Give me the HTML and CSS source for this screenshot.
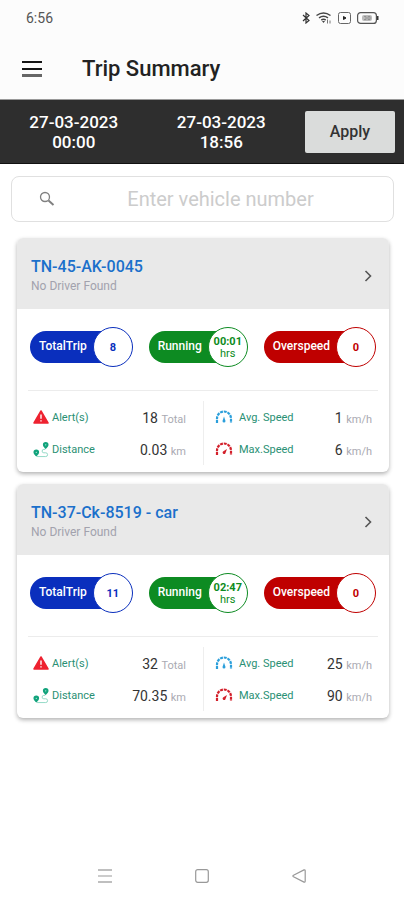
FILE: index.html
```html
<!DOCTYPE html>
<html lang="en">
<head>
<meta charset="utf-8">
<meta name="viewport" content="width=device-width, initial-scale=1">
<title>Trip Summary</title>
<link rel="stylesheet" href="styles.css">
</head>
<body>
<svg class="sprite" aria-hidden="true">
  <symbol id="alert" viewBox="0 0 16 14">
    <path d="M8 1 15 13H1Z" fill="#ee2230" stroke="#ee2230" stroke-width="1.5" stroke-linejoin="round"/>
    <path d="M8 4.5v4.2M8 10.2v1.4" stroke="#fff" stroke-width="1.4"/>
  </symbol>
  <symbol id="route" viewBox="0 0 17 17">
    <path d="M13.500 0.500a3 3 0 0 1 3 3c0 2-3 4.500-3 4.500s-3-2.500-3-4.500a3 3 0 0 1 3-3ZM3.500 8.500a3 3 0 0 1 3 3c0 2-3 4.500-3 4.500s-3-2.500-3-4.500a3 3 0 0 1 3-3Z" fill="#12a37c"/>
    <circle cx="13.500" cy="3.500" r=".7" fill="#b9eedd"/><circle cx="3.500" cy="11.500" r=".7" fill="#b9eedd"/>
    <path d="M4 16h9.500a2 2 0 0 0 0-4h-2a1.800 1.800 0 0 1 0-3.600h1.500" fill="none" stroke="#8ed8c3"/>
  </symbol>
  <symbol id="gauge-low" viewBox="0 0 18 14">
    <path d="M2 13V8.500a7 7 0 0 1 14 0V13" fill="none" stroke="#2b9fdb" stroke-width="2.200" stroke-dasharray="2.900 .9"/>
    <path d="M9 6.500 10.500 11a1.500 1.500 0 1 1-3 0Z" fill="#2b9fdb"/>
  </symbol>
  <symbol id="gauge-high" viewBox="0 0 18 14">
    <path d="M2 13V8.500a7 7 0 0 1 14 0V13" fill="none" stroke="#d3202b" stroke-width="2.200" stroke-dasharray="2.900 .9"/>
    <path d="M12 7 10.300 11.500a1.500 1.500 0 1 1-2.300-2Z" fill="#d3202b"/>
  </symbol>
  <symbol id="chevron" viewBox="0 0 8 12">
    <path d="m1.500 1 5 5-5 5" fill="none" stroke="#555" stroke-width="1.600"/>
  </symbol>
</svg>

<div class="screen">
  <div class="status">
    <span>6:56</span>
    <div class="status-icons">
      <svg width="8" height="12" viewBox="0 0 8 12" fill="none" stroke="#333" stroke-width="1.200"><path d="m1 3 6 5.500L4 11V1l3 2.500L1 9"/></svg>
      <svg width="16" height="12" viewBox="0 0 16 12" fill="none" stroke="#444" stroke-width="1.500"><path d="M.5 3.500Q7.500-1.500 14.500 3.500M3 5.800q4.500-3 9 0M5.300 8q2.200-1.400 4.400 0"/><path d="m6 9 1.500 2L9 9Z" fill="#444" stroke="none"/><path d="M11.500 7.500v4m2.500-3v3" stroke="#777" stroke-width="1"/></svg>
      <svg width="13" height="12" viewBox="0 0 13 12" fill="none" stroke="#666"><rect x=".5" y=".5" width="12" height="11" rx="2"/><path d="M5.500 4.500v3L8 6Z" fill="#222" stroke="#222"/></svg>
      <svg width="22" height="12" viewBox="0 0 22 12"><rect x=".6" y=".6" width="18.800" height="10.800" rx="3" fill="none" stroke="#555" stroke-width="1.200"/><rect x="5" y="3" width="10" height="6" rx="2" fill="#bbb"/><path d="M7 4.500h2v3H7m4 0v-3h2v3Z" fill="none" stroke="#888" stroke-width=".8"/><path d="M20.700 4v4" stroke="#333" stroke-width="1.600"/></svg>
    </div>
  </div>

  <header class="appbar">
    <button class="menu" aria-label="Menu"><svg width="22" height="18" viewBox="0 0 22 18"><path d="M1 2h20M1 9h20" stroke="#151515" stroke-width="2"/><path d="M1 15.500h20" stroke="#666" stroke-width="3"/></svg></button>
    <h1>Trip Summary</h1>
  </header>

  <div class="range">
    <button class="date">27-03-2023<br>00:00</button>
    <button class="date">27-03-2023<br>18:56</button>
    <button class="apply">Apply</button>
  </div>

  <main>
    <label class="search">
      <svg width="16" height="16" viewBox="0 0 16 16" fill="none" stroke="#808080"><circle cx="6" cy="6" r="4.500" stroke-width="1.300"/><path d="m9.500 9.500 5 4.500" stroke-width="2"/></svg>
      <input type="text" placeholder="Enter vehicle number" aria-label="Vehicle number">
    </label>

    <article class="card">
      <header class="card-head">
        <div><h2>TN-45-AK-0045</h2><p>No Driver Found</p></div>
        <a href="#" aria-label="Open trip"><svg width="8" height="12"><use href="#chevron"/></svg></a>
      </header>
      <div class="pills">
        <div class="pill blue"><span class="tag">TotalTrip</span><span class="count">8</span></div>
        <div class="pill green"><span class="tag">Running</span><span class="count">00:01<small>hrs</small></span></div>
        <div class="pill red"><span class="tag">Overspeed</span><span class="count">0</span></div>
      </div>
      <div class="stats">
        <dl>
          <div><dt><svg width="16" height="14"><use href="#alert"/></svg>Alert(s)</dt><dd>18 <small>Total</small></dd></div>
          <div><dt><svg width="16" height="17"><use href="#route"/></svg>Distance</dt><dd>0.03 <small>km</small></dd></div>
        </dl>
        <dl>
          <div><dt><svg width="18" height="14"><use href="#gauge-low"/></svg>Avg. Speed</dt><dd>1 <small>km/h</small></dd></div>
          <div><dt><svg width="18" height="14"><use href="#gauge-high"/></svg>Max.Speed</dt><dd>6 <small>km/h</small></dd></div>
        </dl>
      </div>
    </article>

    <article class="card">
      <header class="card-head">
        <div><h2>TN-37-Ck-8519 - car</h2><p>No Driver Found</p></div>
        <a href="#" aria-label="Open trip"><svg width="8" height="12"><use href="#chevron"/></svg></a>
      </header>
      <div class="pills">
        <div class="pill blue"><span class="tag">TotalTrip</span><span class="count">11</span></div>
        <div class="pill green"><span class="tag">Running</span><span class="count">02:47<small>hrs</small></span></div>
        <div class="pill red"><span class="tag">Overspeed</span><span class="count">0</span></div>
      </div>
      <div class="stats">
        <dl>
          <div><dt><svg width="16" height="14"><use href="#alert"/></svg>Alert(s)</dt><dd>32 <small>Total</small></dd></div>
          <div><dt><svg width="16" height="17"><use href="#route"/></svg>Distance</dt><dd>70.35 <small>km</small></dd></div>
        </dl>
        <dl>
          <div><dt><svg width="18" height="14"><use href="#gauge-low"/></svg>Avg. Speed</dt><dd>25 <small>km/h</small></dd></div>
          <div><dt><svg width="18" height="14"><use href="#gauge-high"/></svg>Max.Speed</dt><dd>90 <small>km/h</small></dd></div>
        </dl>
      </div>
    </article>
  </main>

  <nav class="system">
    <button aria-label="Recent apps"><svg width="14" height="14" viewBox="0 0 14 14" stroke="#aaa"><path d="M0 1h14M0 13h14" stroke-width="1.400"/><path d="M0 7h14" stroke="#ccc" stroke-width="2"/></svg></button>
    <button aria-label="Home"><svg width="14" height="14" viewBox="0 0 14 14" fill="none" stroke="#999" stroke-width="1.200"><rect x=".7" y=".7" width="12.600" height="12.600" rx="2"/></svg></button>
    <button aria-label="Back"><svg width="14" height="14" viewBox="0 0 14 14" fill="none" stroke="#999" stroke-width="1.200" stroke-linejoin="round"><path d="M12 .9Q13.200.5 13.200 2v10q0 1.500-1.200 1.100L1.500 7.800Q.3 7 1.500 6.200Z"/></svg></button>
  </nav>
</div>
</body>
</html>
```
FILE: styles.css
```css
* { box-sizing: border-box; margin: 0; padding: 0; }
body { font-family: Roboto, "Liberation Sans", sans-serif; background: #fff; color: #222; }
button { font: inherit; color: inherit; background: none; border: 0; }
svg { display: block; flex: none; }
.sprite { position: absolute; width: 0; height: 0; }
.screen { min-height: 100vh; display: flex; flex-direction: column; }

.status { display: flex; justify-content: space-between; align-items: center; height: 36px; padding: 0 25px 0 26px; background: #fcfcfc; font-size: 14px; color: #555; }
.status-icons { display: flex; align-items: center; gap: 6px; }

.appbar { display: flex; align-items: center; gap: 39px; height: 64px; padding: 3px 21px 0; background: #fcfcfc; border-bottom: 1px solid #999; }
.appbar h1 { font-size: 22px; font-weight: 500; line-height: 28px; color: #222; }

.range { display: grid; grid-template-columns: 1fr 1fr 100px; align-items: center; height: 64px; padding: 0 9px 0 0; background: #2e2e2e; border-bottom: 1px solid #111; }
.date { padding-top: 1px; font-size: 17px; font-weight: 500; line-height: 20px; color: #fff; }
.apply { height: 42px; margin-left: 10px; background: #dadcdb; border-radius: 2px; font-size: 16px; font-weight: 500; color: #333; }

main { flex: 1; padding: 12px 10px 0 11px; }
.search { display: flex; align-items: center; height: 46px; padding: 0 27px; border: 1px solid #e0e0e0; border-radius: 8px; }
.search input { flex: 1; min-width: 0; width: 100%; padding-left: 20px; border: 0; outline: 0; background: none; font: 20px Roboto, "Liberation Sans", sans-serif; text-align: center; color: #333; }
.search input::placeholder { color: #ccc; }

.card { margin: 16px 5px 0 6px; border-radius: 6px; background: #fff; overflow: hidden; box-shadow: 0 2px 4px rgba(0, 0, 0, .3); }
.card + .card { margin-top: 12px; }
.card-head { display: flex; justify-content: space-between; align-items: center; height: 71px; padding: 4px 17px 0 14px; background: #e9e9e9; }
.card-head h2 { font-size: 16px; font-weight: 500; line-height: 20px; color: #1b70cb; }
.card-head p { font-size: 12px; line-height: 18px; color: #a2a2ad; }

.pills { display: flex; justify-content: space-between; margin: 0 11px; padding: 18px 2px 23px; border-bottom: 1px solid #ececec; }
.pill { display: flex; align-items: center; }
.tag { height: 32px; padding: 0 26px 0 9px; margin-right: -20px; border-radius: 16px 0 0 16px; background: var(--tone); color: #fff; font-size: 12px; font-weight: 500; line-height: 31px; }
.count { position: relative; display: flex; flex-direction: column; align-items: center; justify-content: center; width: 40px; height: 40px; border: 1px solid var(--tone); border-radius: 50%; background: #fff; color: var(--tone); font-size: 11px; font-weight: 700; line-height: 13px; }
.count small { font-size: 11px; font-weight: 400; line-height: 12px; }
.blue { --tone: #0a2fbd; }
.green { --tone: #0d8b22; }
.red { --tone: #bf0000; }

.stats { display: grid; grid-template-columns: 1fr 1fr; padding: 10px 0 7px; }
.stats dl { padding: 0 17px 0 16px; }
.stats dl + dl { padding: 0 17px 0 11px; border-left: 1px solid #eee; }
.stats dl > div { display: flex; justify-content: space-between; align-items: center; height: 32px; }
.stats dt { display: flex; align-items: center; gap: 3px; font-size: 11px; color: #299074; }
.stats dl + dl dt { gap: 6px; }
.stats dd { padding-top: 3px; font-size: 14px; line-height: 18px; color: #333; }
.stats dd small { font-size: 11px; color: #aaaab2; }

.system { display: flex; justify-content: center; align-items: center; gap: 83px; height: 48px; }
.system button { display: flex; }
```
